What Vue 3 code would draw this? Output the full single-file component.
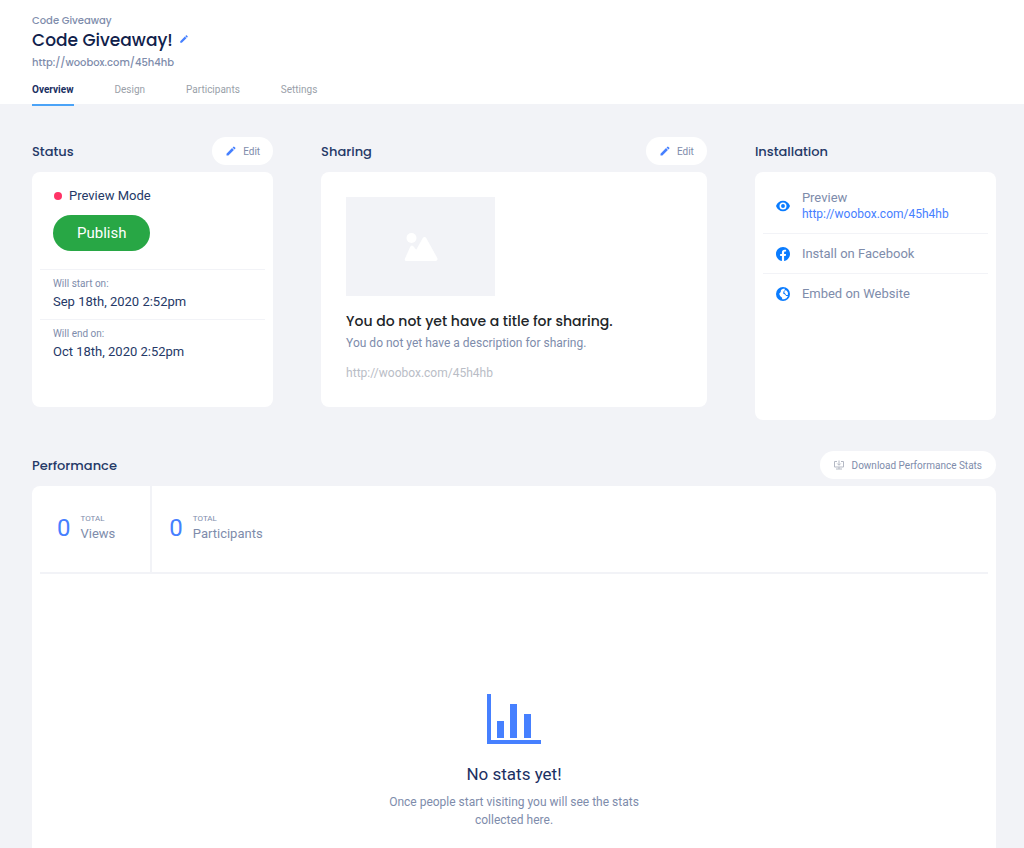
<script setup>
import { ref } from 'vue'

const tabs = ['Overview', 'Design', 'Participants', 'Settings']
const activeTab = ref('Overview')
const url = 'http://woobox.com/45h4hb'
const dates = [
  { label: 'Will start on:', value: 'Sep 18th, 2020 2:52pm' },
  { label: 'Will end on:', value: 'Oct 18th, 2020 2:52pm' },
]
const stats = [
  { value: 0, name: 'Views' },
  { value: 0, name: 'Participants' },
]
const pencil =
  'M3 17.25V21h3.75L17.81 9.94l-3.75-3.75L3 17.25zM20.71 7.04a1 1 0 0 0 0-1.41l-2.34-2.34a1 1 0 0 0-1.41 0l-1.83 1.83 3.75 3.75 1.83-1.83z'
</script>

<template>
  <div class="page">
    <header class="top">
      <div class="crumb">Code Giveaway</div>
      <div class="title-row">
        <h1>Code Giveaway!</h1>
        <button class="rename" type="button" aria-label="Rename">
          <svg viewBox="0 0 24 24" width="10" height="10"><path :d="pencil" /></svg>
        </button>
      </div>
      <a class="top-url" href="#">{{ url }}</a>
      <nav class="tabs">
        <a
          v-for="tab in tabs"
          :key="tab"
          href="#"
          :class="{ active: tab === activeTab }"
          @click.prevent="activeTab = tab"
        >{{ tab }}</a>
      </nav>
    </header>

    <main>
      <div class="columns">
        <section>
          <div class="head">
            <h2>Status</h2>
            <button class="pill" type="button">
              <svg class="pencil" viewBox="0 0 24 24" width="12" height="12"><path :d="pencil" /></svg>
              Edit
            </button>
          </div>
          <div class="card status">
            <div class="mode-block">
              <div class="mode"><span class="dot"></span>Preview Mode</div>
              <button class="publish" type="button">Publish</button>
            </div>
            <div v-for="d in dates" :key="d.label" class="date">
              <div class="date-label">{{ d.label }}</div>
              <div class="date-value">{{ d.value }}</div>
            </div>
          </div>
        </section>

        <section>
          <div class="head">
            <h2>Sharing</h2>
            <button class="pill" type="button">
              <svg class="pencil" viewBox="0 0 24 24" width="12" height="12"><path :d="pencil" /></svg>
              Edit
            </button>
          </div>
          <div class="card sharing">
            <div class="thumb">
              <svg viewBox="0 0 34 28" width="34" height="28">
                <circle cx="7.500" cy="5" r="5" />
                <path d="M1 25.500 6 14.200Q7.500 11 9.600 13.500L12.200 16.800 18.500 5.400Q20.500 2.800 22.500 5.400L33.400 25.200Q34 28 31.500 28H2.500Q0 28 1 25.500z" />
              </svg>
            </div>
            <h3>You do not yet have a title for sharing.</h3>
            <p class="desc">You do not yet have a description for sharing.</p>
            <p class="share-url">{{ url }}</p>
          </div>
        </section>

        <section>
          <div class="head"><h2>Installation</h2></div>
          <div class="card install">
            <div class="install-row first">
              <svg viewBox="0 0 24 24" width="14" height="14">
                <path d="M12 3C6.500 3 2 6.400 0 12c2 5.600 6.500 9 12 9s10-3.400 12-9c-2-5.600-6.500-9-12-9zm0 15a6 6 0 1 1 0-12 6 6 0 0 1 0 12zm0-9.300a3.300 3.300 0 1 0 0 6.600 3.300 3.300 0 0 0 0-6.600z" />
              </svg>
              <div>
                <div>Preview</div>
                <a class="preview-link" href="#">{{ url }}</a>
              </div>
            </div>
            <a class="install-row" href="#">
              <svg viewBox="0 0 24 24" width="14" height="14">
                <path d="M24 12.070C24 5.400 18.630 0 12 0S0 5.400 0 12.070C0 18.100 4.390 23.100 10.130 24v-8.440H7.080v-3.490h3.050V9.410c0-3.020 1.790-4.700 4.530-4.700 1.310 0 2.690.24 2.690.24v2.970h-1.510c-1.490 0-1.960.93-1.960 1.890v2.260h3.330l-.53 3.490h-2.800V24C19.610 23.100 24 18.100 24 12.070z" />
              </svg>
              <span>Install on Facebook</span>
            </a>
            <a class="install-row" href="#">
              <svg viewBox="0 0 24 24" width="14" height="14">
                <circle cx="12" cy="12" r="12" />
                <path class="land" d="M12 3H15V5.500L12.500 8V11.500L15.500 13 17.500 15.500H20.500L18 19.200 14 21H10.500V18.500L7 15.500 5.500 11.500 8 8.500 8.500 5z" />
                <path d="M15.500 5.500 18.500 6.500 20.500 10 20.300 13.500H17.500L15.500 10.500 14 9z" class="land" />
              </svg>
              <span>Embed on Website</span>
            </a>
          </div>
        </section>
      </div>

      <section class="performance">
        <div class="head">
          <h2>Performance</h2>
          <button class="pill wide" type="button">
            <svg class="download" viewBox="0 0 20 18" width="10" height="10">
              <path d="M6 2H1v11h18V2h-5M10 0v9M6.500 6 10 9.500 13.500 6M4 17h12M10 13v4" />
            </svg>
            Download Performance Stats
          </button>
        </div>
        <div class="card perf-card">
          <div class="stats">
            <div v-for="s in stats" :key="s.name" class="stat">
              <span class="num">{{ s.value }}</span>
              <div>
                <div class="total">TOTAL</div>
                <div class="name">{{ s.name }}</div>
              </div>
            </div>
          </div>
          <div class="empty">
            <svg viewBox="0 0 54 50" width="54" height="50">
              <path d="M0 0h4v46h50v4H0zM10 27h7v17h-7zM23 10h7v34h-7zM37 20h7v24h-7z" />
            </svg>
            <h4>No stats yet!</h4>
            <p>Once people start visiting you will see the stats collected here.</p>
          </div>
        </div>
      </section>
    </main>
  </div>
</template>

<style>
body {
  margin: 0;
  background: #f2f3f7;
}
</style>

<style scoped>
.page {
  min-height: 100vh;
  display: flex;
  flex-direction: column;
  font-family: Roboto, "Liberation Sans", sans-serif;
  font-size: 13px;
  line-height: 16px;
  color: #7e8cab;
}
h1, h2, h3, h4, p {
  margin: 0;
  font-weight: 400;
}
a {
  color: inherit;
  text-decoration: none;
}
button {
  border: 0;
  font-family: inherit;
  cursor: pointer;
}
svg {
  flex: none;
  display: block;
}
h1, h2, h3, .crumb, .top-url {
  font-family: Poppins, Inter, "Open Sans", sans-serif;
  font-weight: 500;
}
.top {
  padding: 13px 32px 0;
  background: #fff;
}
.crumb {
  font-size: 10px;
  line-height: 16px;
}
.title-row {
  display: flex;
  align-items: center;
  gap: 6px;
}
h1 {
  font-size: 17px;
  line-height: 22px;
  color: #10214b;
}
.rename {
  padding: 0;
  background: none;
}
.rename svg, .pencil {
  fill: #4680ff;
}
.rename svg {
  margin-bottom: 2px;
}
.top-url {
  display: block;
  margin-top: 4px;
  font-size: 10px;
  line-height: 16px;
}
.tabs {
  display: flex;
  gap: 41px;
  margin-top: 11px;
  margin-bottom: -2px;
  font-size: 10px;
  color: #9a9fa9;
}
.tabs a {
  height: 22px;
  border-bottom: 2px solid transparent;
}
.tabs .active {
  color: #1b2f62;
  font-weight: 700;
  border-color: #4ba3f7;
}
main {
  flex: 1;
  display: flex;
  flex-direction: column;
  padding: 33px 28px 0 32px;
}
.columns {
  display: grid;
  grid-template-columns: 5fr 8fr 5fr;
  gap: 48px;
  align-items: start;
}
.head {
  display: flex;
  align-items: center;
  justify-content: space-between;
  height: 28px;
  margin-bottom: 7px;
}
h2 {
  padding-top: 2px;
  font-size: 13px;
  line-height: 20px;
  color: #253967;
}
.pill {
  display: flex;
  align-items: center;
  gap: 6px;
  height: 28px;
  padding: 0 13px;
  border-radius: 14px;
  background: #fff;
  color: #7e8cab;
  font-size: 10px;
}
.pill.wide {
  padding: 0 14px;
  gap: 8px;
}
.download {
  fill: none;
  stroke: #b4b9c4;
  stroke-width: 2;
}
.card {
  background: #fff;
  border-radius: 8px;
}
.status, .sharing {
  min-height: 235px;
  box-sizing: border-box;
}
.status {
  padding: 16px 8px;
}
.mode-block {
  padding: 0 13px 18px;
}
.mode {
  display: flex;
  align-items: center;
  gap: 7px;
  color: #253967;
  font-size: 13px;
}
.dot {
  width: 8px;
  height: 8px;
  margin-left: 1px;
  border-radius: 50%;
  background: #ff3366;
}
.publish {
  height: 36px;
  margin-top: 11px;
  padding: 0 24px;
  border-radius: 18px;
  background: #28a745;
  color: #fff;
  font-size: 15px;
}
.date {
  padding: 6px 13px 9px;
  border-top: 1px solid #f2f3f7;
}
.date-label {
  font-size: 10px;
}
.date-value {
  margin-top: 2px;
  color: #253967;
  font-size: 13px;
}
.sharing {
  padding: 25px;
}
.thumb {
  width: 149px;
  height: 99px;
  display: flex;
  align-items: center;
  justify-content: center;
  background: #f2f3f7;
}
.thumb svg {
  fill: #fff;
}
h3 {
  margin-top: 15px;
  font-size: 14px;
  line-height: 20px;
  color: #212529;
}
.desc {
  margin-top: 4px;
  font-size: 12px;
}
.share-url {
  margin-top: 14px;
  font-size: 12px;
  color: #b9bdc6;
}
.install {
  min-height: 248px;
  padding: 7px 8px;
  box-sizing: border-box;
}
.install-row {
  display: flex;
  align-items: center;
  gap: 12px;
  min-height: 39px;
  padding: 0 13px;
}
.install-row + .install-row {
  border-top: 1px solid #f2f3f7;
}
.install-row.first {
  min-height: 54px;
}
.install-row svg {
  fill: #0a7cff;
}
.install-row .land {
  fill: #fff;
}
.preview-link {
  display: block;
  color: #4680ff;
  font-size: 12px;
}
.performance {
  flex: 1;
  display: flex;
  flex-direction: column;
  margin-top: 31px;
}
.perf-card {
  flex: 1;
  border-radius: 8px 8px 0 0;
}
.stats {
  display: flex;
  margin: 0 8px;
  border-bottom: 2px solid #f2f3f7;
}
.stat {
  display: flex;
  align-items: center;
  gap: 10px;
  height: 84px;
  padding: 0 35px 2px 17px;
}
.stat:first-child {
  border-right: 2px solid #f2f3f7;
}
.num {
  color: #4680ff;
  font-size: 24px;
  line-height: 28px;
}
.total {
  font-size: 8px;
  line-height: 12px;
}
.name {
  font-size: 13px;
  line-height: 18px;
}
.empty {
  display: flex;
  flex-direction: column;
  align-items: center;
  padding: 120px 16px 0;
  text-align: center;
}
.empty svg {
  fill: #4680ff;
}
h4 {
  margin-top: 18px;
  color: #1b2f62;
  font-size: 17px;
  line-height: 24px;
}
.empty p {
  max-width: 260px;
  margin-top: 7px;
  font-size: 12px;
  line-height: 18px;
}
</style>
